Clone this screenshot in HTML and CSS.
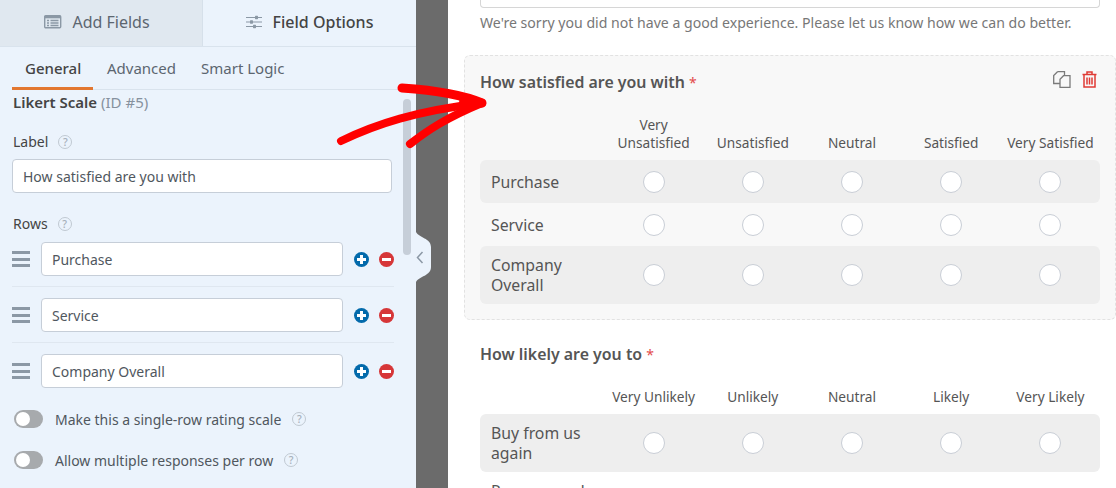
FILE: index.html
```html
<!DOCTYPE html>
<html lang="en">
<head>
<meta charset="utf-8">
<title>Likert Scale field options</title>
<link rel="stylesheet" href="styles.css">
</head>
<body>
<div class="app">
  <aside class="sidebar">
    <div class="tabs">
      <div class="tab tab-add">
        <svg class="tab-icon" width="18" height="14" viewBox="0 0 18 14"><rect x="0.7" y="0.7" width="16" height="12" rx="1" fill="none" stroke="#8b98a5" stroke-width="1.4"/><rect x="0.7" y="0.7" width="16" height="2.6" fill="#8b98a5"/><path d="M3 5.5h2M6.5 5.5h8M3 8h2M6.5 8h8M3 10.5h2M6.5 10.5h8" stroke="#8b98a5" stroke-width="1.3"/></svg>
        <span>Add Fields</span>
      </div>
      <div class="tab tab-options">
        <svg class="tab-icon" width="16" height="14" viewBox="0 0 16 14"><path d="M0 2.5h16M0 7h16M0 11.5h16" stroke="#8b98a5" stroke-width="1.2"/><rect x="9" y="0.8" width="3" height="3.4" rx=".6" fill="#8b98a5"/><rect x="4" y="5.3" width="3" height="3.4" rx=".6" fill="#8b98a5"/><rect x="7" y="9.8" width="3" height="3.4" rx=".6" fill="#8b98a5"/></svg>
        <span>Field Options</span>
      </div>
    </div>
    <div class="subtabs">
      <div class="subtab subtab-active">General</div>
      <div class="subtab">Advanced</div>
      <div class="subtab">Smart Logic</div>
    </div>
    <div class="panel">
      <div class="field-title"><strong>Likert Scale</strong> <span>(ID #5)</span></div>
      <div class="label label-first">Label <span class="help">?</span></div>
      <div class="input input-wide">How satisfied are you with</div>
      <div class="label label-rows">Rows <span class="help">?</span></div>
      <div class="option-row">
        <span class="drag"></span>
        <div class="input input-row">Purchase</div>
        <span class="btn btn-add"></span>
        <span class="btn btn-remove"></span>
      </div>
      <div class="option-row">
        <span class="drag"></span>
        <div class="input input-row">Service</div>
        <span class="btn btn-add"></span>
        <span class="btn btn-remove"></span>
      </div>
      <div class="option-row option-last">
        <span class="drag"></span>
        <div class="input input-row">Company Overall</div>
        <span class="btn btn-add"></span>
        <span class="btn btn-remove"></span>
      </div>
      <div class="toggle-row"><span class="toggle"></span><span>Make this a single-row rating scale</span><span class="help">?</span></div>
      <div class="toggle-row toggle-second"><span class="toggle"></span><span>Allow multiple responses per row</span><span class="help">?</span></div>
    </div>
    <div class="scrollbar"></div>
  </aside>
  <div class="divider">
    <div class="handle">
      <svg width="16" height="50" viewBox="0 0 16 50"><path d="M0 0C3 6 15 6 15 15V35C15 44 3 44 0 50Z" fill="#ebf3fc"/><path d="M6.500 20L1.500 25.500L6.500 31" fill="none" stroke="#8b98a5" stroke-width="1.500"/></svg>
    </div>
  </div>
  <main class="preview">
    <div class="top-input"></div>
    <p class="desc">We're sorry you did not have a good experience. Please let us know how we can do better.</p>
    <section class="card card-active">
      <div class="card-actions">
        <svg width="18" height="17" viewBox="0 0 18 17"><path d="M4.500 .7H11.500V4.500M4.500 .7L.7 4.500V12.500H7" fill="none" stroke="#7a7a7a" stroke-width="1.300"/><path d="M10.500 4.700H17V16.300H7V8.200Z" fill="none" stroke="#7a7a7a" stroke-width="1.300"/></svg>
        <svg width="15" height="17" viewBox="0 0 15 17"><path d="M.5 3.500H14.500M5 3.500V1H10V3.500M2 3.500V16H13V3.500M5 6.500V13.500M7.500 6.500V13.500M10 6.500V13.500" fill="none" stroke="#df3a34" stroke-width="1.500"/></svg>
      </div>
      <h3 class="question">How satisfied are you with <span class="req">*</span></h3>
      <div class="likert">
        <div class="head-row"><span></span><span>Very Unsatisfied</span><span>Unsatisfied</span><span>Neutral</span><span>Satisfied</span><span>Very Satisfied</span></div>
        <div class="row row-shaded row-1"><span class="row-name">Purchase</span><i></i><i></i><i></i><i></i><i></i></div>
        <div class="row row-1"><span class="row-name">Service</span><i></i><i></i><i></i><i></i><i></i></div>
        <div class="row row-shaded row-2"><span class="row-name">Company Overall</span><i></i><i></i><i></i><i></i><i></i></div>
      </div>
    </section>
    <section class="card">
      <h3 class="question">How likely are you to <span class="req">*</span></h3>
      <div class="likert">
        <div class="head-row head-single"><span></span><span>Very Unlikely</span><span>Unlikely</span><span>Neutral</span><span>Likely</span><span>Very Likely</span></div>
        <div class="row row-shaded row-2"><span class="row-name">Buy from us again</span><i></i><i></i><i></i><i></i><i></i></div>
        <div class="row row-2"><span class="row-name">Recommend to others</span><i></i><i></i><i></i><i></i><i></i></div>
      </div>
    </section>
  </main>
  <svg class="arrow" width="170" height="70" viewBox="0 0 170 70">
    <path d="M5 59C40 42 80 29 146 21" fill="none" stroke="#f00" stroke-width="8" stroke-linecap="round"/>
    <path d="M66 6C95 8 125 12 146 21" fill="none" stroke="#f00" stroke-width="9" stroke-linecap="round"/>
    <path d="M74 62C92 48 110 36 146 21" fill="none" stroke="#f00" stroke-width="8" stroke-linecap="round"/>
    <path d="M124 13L150 21L147 25L122 29Z" fill="#f00"/>
  </svg>
</div>
</body>
</html>
```
FILE: styles.css
```css
* { box-sizing: border-box; }
html, body { margin: 0; height: 488px; overflow: hidden; }
body { font-family: "Noto Sans", "Open Sans", sans-serif; color: #444; background: #fff; }
.app { position: relative; display: flex; width: 1116px; height: 488px; overflow: hidden; }

.sidebar { position: relative; flex: 0 0 416px; min-width: 0; background: #ebf3fc; }
.tabs { display: flex; height: 47px; border-bottom: 1px solid #d9e3ed; }
.tab { display: flex; align-items: center; justify-content: center; font-size: 16px; padding-bottom: 2px; }
.tab-add { width: 203px; gap: 10px; background: #e0e8f0; border-right: 1px solid #d6e0ea; color: #5c6670; padding-right: 8px; }
.tab-options { flex: 1; gap: 11px; color: #444; font-weight: 500; }
.tab-icon { flex: none; }

.subtabs { display: flex; height: 43px; margin: 0 12px; border-bottom: 1px solid #d9e3ed; }
.subtab { padding: 11px 11px 0 14px; font-size: 15px; color: #5c6670; }
.subtab-active { width: 81px; height: 43px; padding: 11px 0 0 13px; color: #444; font-weight: 500; border-bottom: 3px solid #e27730; }

.panel { padding: 2px 0 0 13px; }
.field-title { font-size: 15px; line-height: 20px; height: 20px; }
.field-title strong { font-weight: 600; color: #444; }
.field-title span { color: #86919e; }
.label { display: flex; align-items: center; gap: 10px; font-size: 14px; line-height: 18px; color: #444; }
.label-first { margin-top: 21px; }
.label-rows { margin-top: 22px; }
.help { display: inline-flex; align-items: center; justify-content: center; flex: none; width: 14px; height: 14px; border: 1.500px solid #c0c9d2; border-radius: 50%; font-size: 10.500px; line-height: 1; color: #a6b0ba; font-weight: 500; }

.input { display: flex; align-items: center; height: 34px; padding: 1px 10px 0; background: #fff; border: 1px solid #c6ced8; border-radius: 4px; font-size: 14px; color: #50575e; }
.input-wide { width: 380px; margin: 8px 0 0 -1px; }
.input-row { width: 302px; margin-left: 11px; }

.label-rows + .option-row { margin-top: 9px; }
.option-row { display: flex; align-items: center; width: 382px; margin: 0 0 11px -1px; padding-bottom: 10px; border-bottom: 1px solid #dfe7f0; }
.option-last { margin-bottom: 0; padding-bottom: 0; border-bottom: 0; }
.drag { position: relative; flex: none; width: 18px; height: 16px; border-top: 3px solid #8b98a5; border-bottom: 3px solid #8b98a5; }
.drag::after { content: ""; position: absolute; left: 0; right: 0; top: 3.500px; height: 3px; background: #8b98a5; }
.btn { position: relative; flex: none; width: 15px; height: 15px; border-radius: 50%; }
.btn-add { background: #036aab; margin-left: 11px; }
.btn-remove { background: #d63638; margin-left: 10px; }
.btn::before { content: ""; position: absolute; left: 3px; right: 3px; top: 6px; height: 3px; background: #fff; }
.btn-add::after { content: ""; position: absolute; top: 3px; bottom: 3px; left: 6px; width: 3px; background: #fff; }

.toggle-row { display: flex; align-items: center; height: 20px; margin-top: 21px; font-size: 14px; color: #50575e; }
.toggle-second { margin-top: 21px; }
.toggle { position: relative; flex: none; width: 29px; height: 18px; margin: 0 12px 0 1px; background: #a7aaad; border-radius: 9px; }
.toggle::after { content: ""; position: absolute; left: 2px; top: 2px; width: 14px; height: 14px; border-radius: 50%; background: #fff; }
.toggle-row .help { margin-left: 11px; }

.scrollbar { position: absolute; left: 403px; top: 99px; width: 8px; height: 156px; border-radius: 4px; background: #c6ced8; }

.divider { position: relative; flex: 0 0 32px; background: #6b6b6b; }
.handle { position: absolute; left: 0; top: 232px; width: 16px; height: 50px; line-height: 0; }

.preview { flex: 1; padding: 0 16px; background: #fff; min-width: 0; }
.top-input { height: 8px; margin: 0 0 0 16px; width: 620px; border: 1px solid #d6d6d6; border-top: 0; border-radius: 0 0 4px 4px; }
.desc { margin: 5px 0 0 16px; font-size: 14.100px; line-height: 20px; color: #777; white-space: nowrap; }

.card { position: relative; width: 652px; padding: 15px; border: 1px solid transparent; border-radius: 6px; }
.card-active { margin-top: 22px; height: 265px; background: #f8f8f8; border: 1px dashed #e2e2e2; }
.card + .card { margin-top: 7px; }
.card-actions { position: absolute; top: 15px; right: 18px; display: flex; align-items: center; gap: 11px; }
.question { margin: 0; font-size: 15.900px; line-height: 22px; font-weight: 600; color: #555; }
.req { color: #e34b4b; font-weight: 400; font-size: 14px; margin-left: 0; }

.likert { width: 620px; margin-top: 16px; }
.head-row, .row { display: grid; grid-template-columns: 124px repeat(5, 1fr); align-items: center; }
.head-row { height: 50px; align-items: end; padding-bottom: 8px; }
.head-single { height: 32px; }
.head-row span { font-size: 13.700px; line-height: 18px; text-align: center; color: #555; }
.row { border-radius: 6px; }
.row-1 { height: 43px; }
.row-2 { height: 58px; }
.row-shaded { background: #eee; }
.row-name { padding: 0 0 0 11px; width: 112px; font-size: 15.800px; line-height: 20px; color: #555; }
.row i { justify-self: center; width: 22px; height: 22px; border-radius: 50%; background: #fff; border: 1px solid #c9ced6; }

.arrow { position: absolute; left: 336px; top: 82px; }
```
